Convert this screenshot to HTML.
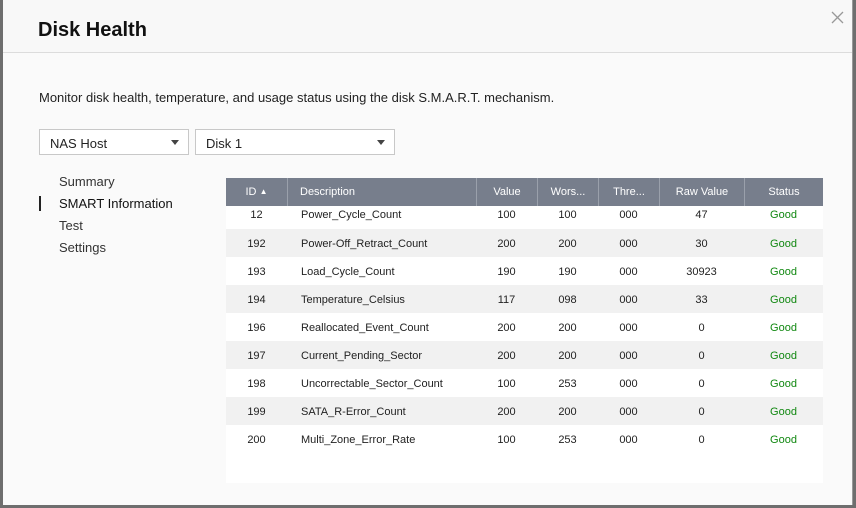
<!DOCTYPE html>
<html><head><meta charset="utf-8"><style>
*{margin:0;padding:0;box-sizing:border-box}
body{width:856px;height:508px;overflow:hidden;background:#6e6e6e;font-family:"Liberation Sans",sans-serif;position:relative}
.dlg{position:absolute;left:3px;top:0;width:850px;height:505px;background:#fafafa;border-right:1px solid #999}
.hdr{height:53px;border-bottom:1px solid #dcdcdc;background:#f8f8f8}
.title{position:absolute;left:35px;top:19px;font-size:20px;font-weight:bold;color:#111}
.close{position:absolute;right:8px;top:11px}
.desc{position:absolute;left:36px;top:90px;font-size:13px;color:#222}
.sel{position:absolute;top:129px;height:26px;border:1px solid #c8c8c8;background:#fff;font-size:13px;color:#222;padding:6px 10px}
.sel:after{content:"";position:absolute;right:9px;top:10px;border-left:4.5px solid transparent;border-right:4.5px solid transparent;border-top:5px solid #444}
.nav{position:absolute;left:56px;font-size:13px;color:#333}
.bar{position:absolute;left:36px;top:196px;width:2px;height:15px;background:#222}
.tbl{position:absolute;left:223px;top:178px;width:597px;height:305px;background:#fff}
.th{height:28px;background:#777e8c;color:#fff;font-size:11px;position:relative}
.row{height:28px;font-size:11px;color:#222;position:relative}
.row.g{background:#f1f1f1}
.c{position:absolute;top:1px;line-height:28px}
.th .c{border-left:1px solid #9aa0ab;height:28px;top:0}
.good{color:#118811}
</style></head><body>
<div class="dlg">
<div class="hdr"></div>
<div class="title">Disk Health</div>
<svg class="close" width="13" height="13" viewBox="0 0 13 13"><path d="M1 1L12 12M12 1L1 12" stroke="#999" stroke-width="1.3"/></svg>
<div class="desc">Monitor disk health, temperature, and usage status using the disk S.M.A.R.T. mechanism.</div>
<div class="sel" style="left:36px;width:150px">NAS Host</div>
<div class="sel" style="left:192px;width:200px">Disk 1</div>
<div class="nav" style="top:174px">Summary</div>
<div class="bar"></div>
<div class="nav" style="top:196px;color:#111">SMART Information</div>
<div class="nav" style="top:218px">Test</div>
<div class="nav" style="top:240px">Settings</div>
<div class="tbl">
<div class="th">
<div class="c" style="left:0;width:61px;border:0;text-align:center">ID <span style="font-size:8px;vertical-align:top">▲</span></div>
<div class="c" style="left:61px;width:189px;padding-left:12px">Description</div>
<div class="c" style="left:250px;width:61px;text-align:center">Value</div>
<div class="c" style="left:311px;width:61px;text-align:center">Wors...</div>
<div class="c" style="left:372px;width:61px;text-align:center">Thre...</div>
<div class="c" style="left:433px;width:85px;text-align:center">Raw Value</div>
<div class="c" style="left:518px;width:79px;text-align:center">Status</div>
</div>
<div id="rows"></div>
</div>
</div>
<script>
var d=[["12","Power_Cycle_Count","100","100","47"],["192","Power-Off_Retract_Count","200","200","30"],["193","Load_Cycle_Count","190","190","30923"],["194","Temperature_Celsius","117","098","33"],["196","Reallocated_Event_Count","200","200","0"],["197","Current_Pending_Sector","200","200","0"],["198","Uncorrectable_Sector_Count","100","253","0"],["199","SATA_R-Error_Count","200","200","0"],["200","Multi_Zone_Error_Rate","100","253","0"]];
var h="";d.forEach(function(r,i){var st=i==0?"height:23px;margin-top:0":"";var lh=i==0?"line-height:17px":"";
h+='<div class="row'+(i%2?' g':'')+'" style="'+st+'">'+
'<div class="c" style="left:0;width:61px;text-align:center;'+lh+'">'+r[0]+'</div>'+
'<div class="c" style="left:75px;'+lh+'">'+r[1]+'</div>'+
'<div class="c" style="left:250px;width:61px;text-align:center;'+lh+'">'+r[2]+'</div>'+
'<div class="c" style="left:311px;width:61px;text-align:center;'+lh+'">'+r[3]+'</div>'+
'<div class="c" style="left:372px;width:61px;text-align:center;'+lh+'">000</div>'+
'<div class="c" style="left:433px;width:85px;text-align:center;'+lh+'">'+r[4]+'</div>'+
'<div class="c good" style="left:518px;width:79px;text-align:center;'+lh+'">Good</div></div>';});
document.getElementById("rows").innerHTML=h;
</script>
</body></html>
